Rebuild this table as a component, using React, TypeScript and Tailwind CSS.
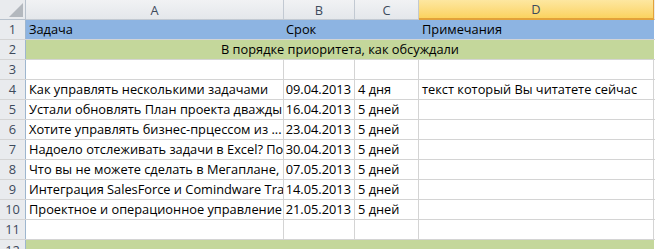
const rows = [
  { task: 'Как управлять несколькими задачами', date: '09.04.2013', dur: '4 дня', note: 'текст который Вы читатете сейчас' },
  { task: 'Устали обновлять План проекта дважды в неделю?', date: '16.04.2013', dur: '5 дней', note: '' },
  { task: 'Хотите управлять бизнес-прцессом из ...', date: '23.04.2013', dur: '5 дней', note: '' },
  { task: 'Надоело отслеживать задачи в Excel? Попробуйте', date: '30.04.2013', dur: '5 дней', note: '' },
  { task: 'Что вы не можете сделать в Мегаплане, но можете', date: '07.05.2013', dur: '5 дней', note: '' },
  { task: 'Интеграция SalesForce и Comindware Tracker', date: '14.05.2013', dur: '5 дней', note: '' },
  { task: 'Проектное и операционное управление', date: '21.05.2013', dur: '5 дней', note: '' },
];

const cols = ['w-[258px]', 'w-[71px]', 'w-[64px]', 'w-[235px]'];

function RowHead({ n }: { n: number }) {
  return (
    <div className="w-[26px] shrink-0 h-full flex items-end justify-center pb-[1px] bg-[#e9ebee] border-r border-[#9eb6ce] text-[#3d4a5c]">
      {n}
    </div>
  );
}

function Cell({ w, children, right }: { w: string; children?: React.ReactNode; right?: boolean }) {
  return (
    <div
      className={`${w} shrink-0 h-full border-r border-[#d4d4d4] overflow-hidden whitespace-nowrap flex items-end pb-[1px] px-[3px] ${right ? 'justify-end' : ''}`}
    >
      {children}
    </div>
  );
}

export default function App() {
  return (
    <div className="w-[655px] h-[249px] overflow-hidden bg-white text-[12.8px] leading-[18px] text-black font-['Open_Sans',sans-serif]">
      {/* column letters */}
      <div className="flex h-[20px]">
        <div className="w-[26px] shrink-0 h-full bg-[#e9ebee] border-r border-b border-[#b7c1cc] relative">
          <div className="absolute right-[2px] bottom-[2px] w-0 h-0 border-l-[14px] border-l-transparent border-b-[14px] border-b-[#b3b8be]" />
        </div>
        {['A', 'B', 'C'].map((l, i) => (
          <div
            key={l}
            className={`${cols[i]} shrink-0 h-full flex items-center justify-center bg-gradient-to-b from-[#f1f2f4] to-[#e4e7eb] border-r border-b border-[#c2c9d2] text-[#3d4a5c]`}
          >
            {l}
          </div>
        ))}
        <div className="w-[235px] shrink-0 h-full flex items-center justify-center bg-gradient-to-b from-[#fde7a0] to-[#fbd35e] border-r border-b-2 border-[#e2a23a] text-[#3d4a5c]">
          D
        </div>
        <div className="flex-1 h-full bg-[#e9ebee] border-b border-[#c2c9d2]" />
      </div>

      {/* row 1: headers */}
      <div className="flex h-[20px] border-b border-[#d4d4d4]">
        <RowHead n={1} />
        <div className="flex w-[628px] shrink-0 h-full bg-[#8db4e2]">
          <div className="w-[257px] shrink-0 flex items-end pb-[1px] px-[3px]">Задача</div>
          <div className="w-[136px] shrink-0 flex items-end pb-[1px] px-[3px]">Срок</div>
          <div className="flex-1 flex items-end pb-[1px] px-[3px]">Примечания</div>
        </div>
      </div>

      {/* row 2: merged caption */}
      <div className="flex h-[20px] border-b border-[#d4d4d4]">
        <RowHead n={2} />
        <div className="w-[628px] shrink-0 h-full bg-[#c4d79b] flex items-end justify-center pb-[1px]">
          В порядке приоритета, как обсуждали
        </div>
      </div>

      {/* row 3: empty */}
      <div className="flex h-[20px] border-b border-[#d4d4d4]">
        <RowHead n={3} />
        {cols.map((w) => (
          <Cell key={w} w={w} />
        ))}
      </div>

      {rows.map((r, i) => (
        <div key={r.date} className="flex h-[20px] border-b border-[#d4d4d4]">
          <RowHead n={i + 4} />
          <Cell w={cols[0]}>{r.task}</Cell>
          <Cell w={cols[1]} right>
            {r.date}
          </Cell>
          <Cell w={cols[2]}>{r.dur}</Cell>
          <Cell w={cols[3]}>{r.note}</Cell>
        </div>
      ))}

      {/* row 11: empty */}
      <div className="flex h-[20px] border-b border-[#d4d4d4]">
        <RowHead n={11} />
        {cols.map((w) => (
          <Cell key={w} w={w} />
        ))}
      </div>

      {/* row 12: green band, cut off */}
      <div className="flex h-[20px]">
        <RowHead n={12} />
        <div className="w-[628px] shrink-0 h-full bg-[#c4d79b]" />
      </div>
    </div>
  );
}
